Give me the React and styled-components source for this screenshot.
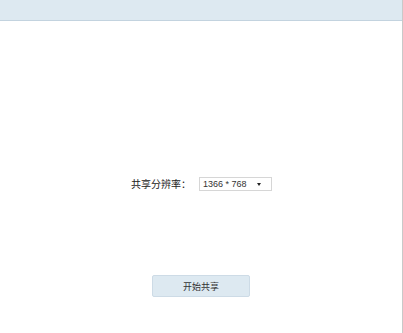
import styled, { createGlobalStyle } from "styled-components";

const Global = createGlobalStyle`
  html, body {
    margin: 0;
    padding: 0;
    background: #fff;
  }
  body {
    font-family: "Noto Sans CJK SC", "Liberation Sans", sans-serif;
    color: #333;
  }
`;

const Window = styled.div`
  width: 402px;
  height: 333px;
  border-right: 1px solid #c9c9c9;
  display: flex;
  flex-direction: column;
  background: #fff;
`;

const TitleBar = styled.div`
  height: 20px;
  flex-shrink: 0;
  background: #dde9f1;
  border-bottom: 1px solid #c3d3df;
`;

const Body = styled.div`
  flex: 1;
  display: flex;
  flex-direction: column;
  align-items: center;
  padding-top: 156px;
`;

const Row = styled.div`
  display: flex;
  align-items: center;
  gap: 8px;
  height: 14px;
  padding-left: 1px;
`;

const Label = styled.span`
  font-size: 10px;
  line-height: 14px;
  color: #222;
`;

const Select = styled.div`
  box-sizing: border-box;
  width: 73px;
  height: 14px;
  border: 1px solid #d6d6d6;
  display: flex;
  align-items: center;
  justify-content: space-between;
  padding: 0 10px 0 3px;
  font-family: "Liberation Sans", "Noto Sans CJK SC", sans-serif;
  font-size: 9px;
  color: #333;
`;

const Caret = styled.span`
  width: 0;
  height: 0;
  border-left: 2.5px solid transparent;
  border-right: 2.5px solid transparent;
  border-top: 3px solid #222;
`;

const Button = styled.button`
  margin-top: 84px;
  width: 98px;
  height: 22px;
  background: #dde9f1;
  border: 1px solid #cddbe6;
  border-radius: 2px;
  font-family: "Noto Sans CJK SC", sans-serif;
  font-size: 9px;
  color: #333;
  padding: 0;
  cursor: pointer;
`;

const App = () => {
  return (
    <Window lang="zh-CN">
      <Global />
      <TitleBar />
      <Body>
        <Row>
          <Label>共享分辨率：</Label>
          <Select>
            <span>1366 * 768</span>
            <Caret />
          </Select>
        </Row>
        <Button>开始共享</Button>
      </Body>
    </Window>
  );
};

export default App;
